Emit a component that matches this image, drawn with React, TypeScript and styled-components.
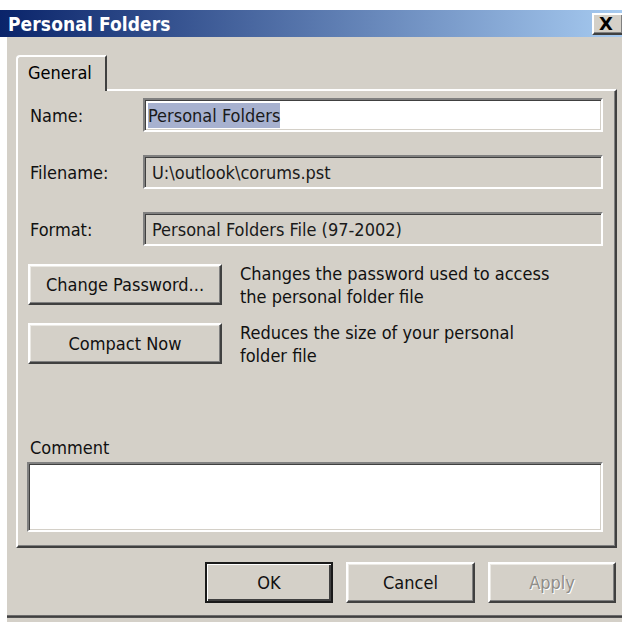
import styled, { createGlobalStyle } from 'styled-components'

const FACE = '#d4d0c8'

const GlobalStyle = createGlobalStyle`
	html,
	body {
		margin: 0;
		padding: 0;
		background: #fff;
	}
	body {
		font-family: 'DejaVu Sans Condensed', 'DejaVu Sans', 'Liberation Sans', sans-serif;
		color: #000;
	}
`

const Screen = styled.div`
	width: 622px;
	height: 622px;
	display: flex;
	flex-direction: column;
	overflow: hidden;
`
// white page margin above the dialog
const PageGap = styled.div`
	height: 10px;
	flex: none;
`
const TitleBar = styled.div`
	height: 27px;
	flex: none;
	display: flex;
	align-items: center;
	justify-content: space-between;
	padding-left: 8px;
	background: linear-gradient(to right, #0a246a, #a6caf0);
`
const Title = styled.span`
	color: #fff;
	font-weight: bold;
	font-size: 19px;
	letter-spacing: 0.1px;
`
const CloseBox = styled.div`
	width: 32px;
	height: 22px;
	margin-right: -2px;
	box-sizing: border-box;
	background: ${FACE};
	border: 2px solid;
	border-color: #fff #404040 #404040 #fff;
	box-shadow: inset -1px -1px 0 #808080;
	display: flex;
	align-items: center;
	justify-content: center;
	padding-right: 4px;
	font: bold 18px 'DejaVu Sans', sans-serif;
	line-height: 1;
`
const Window = styled.div`
	flex: 1;
	margin-left: 7px;
	background: ${FACE};
	display: flex;
	flex-direction: column;
`
const Content = styled.div`
	padding: 18px 5px 0 9px;
	display: flex;
	flex-direction: column;
`
const TabStrip = styled.div`
	display: flex;
	height: 34px;
	position: relative;
	z-index: 1;
`
const Tab = styled.div`
	width: 91px;
	height: 36px;
	box-sizing: border-box;
	background: ${FACE};
	border-top: 2px solid #fff;
	border-left: 2px solid #fff;
	border-right: 2px solid #404040;
	border-top-left-radius: 4px;
	padding: 5px 0 0 10px;
	font-size: 18px;
	line-height: 22px;
`
const Panel = styled.div`
	height: 459px;
	box-sizing: border-box;
	border: 2px solid;
	border-color: #fff #404040 #404040 #fff;
	box-shadow: inset -1px -1px 0 #808080;
	padding: 7px 12px 14px 10px;
	display: flex;
	flex-direction: column;
`
const Fields = styled.div`
	display: grid;
	grid-template-columns: 115px 1fr;
	grid-auto-rows: 34px;
	row-gap: 23px;
	align-items: center;
`
const Label = styled.div`
	font-size: 18px;
	padding-left: 2px;
	color: #111;
`
const Box = styled.div<{ $editable?: boolean }>`
	height: 34px;
	box-sizing: border-box;
	border: 2px solid;
	border-color: #808080 #fff #fff #808080;
	box-shadow:
		inset 1px 1px 0 #404040,
		inset -1px -1px 0 ${FACE};
	background: ${(p) => (p.$editable ? '#fff' : FACE)};
	padding-left: ${(p) => (p.$editable ? '3px' : '7px')};
	display: flex;
	align-items: center;
	font-size: 18px;
	color: #1a1a1a;
	white-space: nowrap;
	overflow: hidden;
`
const Selected = styled.span`
	background: #a7b1cf;
	padding: 2px 0;
`
const Actions = styled.div`
	margin-top: 18px;
	display: flex;
	flex-direction: column;
	gap: 15px;
`
const ActionRow = styled.div`
	display: flex;
	align-items: flex-start;
	gap: 18px;
`
const Button = styled.button<{ $default?: boolean; $width: number }>`
	width: ${(p) => p.$width}px;
	height: 41px;
	flex: none;
	box-sizing: border-box;
	background: ${FACE};
	border: 2px solid;
	border-color: ${(p) => (p.$default ? '#1a1a1a' : '#fff #404040 #404040 #fff')};
	box-shadow: ${(p) =>
		p.$default
			? 'inset 1px 1px 0 #fff, inset -2px -2px 0 #404040'
			: 'inset -1px -1px 0 #808080, inset 1px 1px 0 #ebe9e4'};
	font-family: inherit;
	font-size: 18px;
	color: #111;
	padding: 0;
	margin: 0;
	cursor: default;

	&:disabled {
		color: #8f8d88;
		text-shadow: 1px 1px 0 #fff;
	}
`
const Note = styled.div`
	margin-top: -2px;
	font-size: 18px;
	line-height: 23px;
	color: #111;
`
const CommentBlock = styled.div`
	margin-top: auto;
	display: flex;
	flex-direction: column;
	gap: 4px;
`
const CommentLabel = styled.div`
	font-size: 18px;
	line-height: 20px;
	padding-left: 2px;
	color: #111;
`
const CommentBox = styled.div`
	height: 70px;
	margin-left: -1px;
	box-sizing: border-box;
	border: 2px solid;
	border-color: #808080 #fff #fff #808080;
	box-shadow:
		inset 1px 1px 0 #404040,
		inset -1px -1px 0 ${FACE};
	background: #fff;
`
const Footer = styled.div`
	margin: 14px 1px 0 0;
	display: flex;
	justify-content: flex-end;
	gap: 13px;
`
const BottomEdge = styled.div`
	margin-top: auto;
	margin-bottom: 4px;
	height: 3px;
	background: linear-gradient(#808080, #404040 50%, #5a5a5a);
`

export default function App() {
	return (
		<Screen>
			<GlobalStyle />
			<PageGap />
			<TitleBar>
				<Title>Personal Folders</Title>
				<CloseBox>X</CloseBox>
			</TitleBar>
			<Window>
				<Content>
					<TabStrip>
						<Tab>General</Tab>
					</TabStrip>
					<Panel>
						<Fields>
							<Label>Name:</Label>
							<Box $editable>
								<Selected>Personal Folders</Selected>
							</Box>
							<Label>Filename:</Label>
							<Box>U:\outlook\corums.pst</Box>
							<Label>Format:</Label>
							<Box>Personal Folders File (97-2002)</Box>
						</Fields>
						<Actions>
							<ActionRow>
								<Button $width={194}>Change Password...</Button>
								<Note>
									Changes the password used to access
									<br />
									the personal folder file
								</Note>
							</ActionRow>
							<ActionRow>
								<Button $width={194}>Compact Now</Button>
								<Note>
									Reduces the size of your personal
									<br />
									folder file
								</Note>
							</ActionRow>
						</Actions>
						<CommentBlock>
							<CommentLabel>Comment</CommentLabel>
							<CommentBox />
						</CommentBlock>
					</Panel>
					<Footer>
						<Button $default $width={128}>
							OK
						</Button>
						<Button $width={129}>Cancel</Button>
						<Button $width={128} disabled>
							Apply
						</Button>
					</Footer>
				</Content>
				<BottomEdge />
			</Window>
		</Screen>
	)
}
